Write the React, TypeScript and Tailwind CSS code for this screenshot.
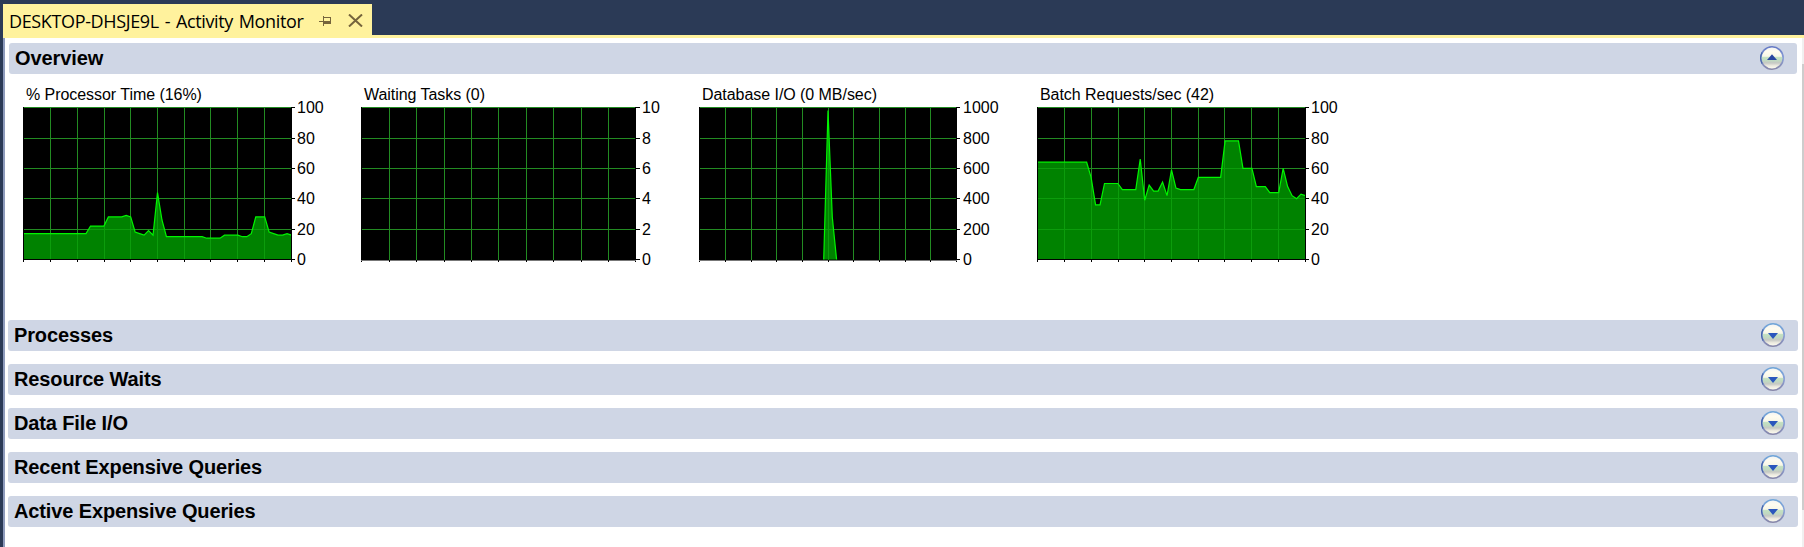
import React from 'react';

const repeat = (value: number, count: number): number[] => Array(count).fill(value);

interface ChartProps {
  id: string;
  title: string;
  max: number;
  grid: number[];
  width: number;
  labelX: number;
  values: number[];
}

// y of the horizontal grid lines, from the maximum down to zero
const rows = [1, 32, 62, 92, 123, 153];

const charts: ChartProps[] = [
  {
    id: 'cpu',
    title: '% Processor Time (16%)',
    max: 100,
    grid: [27, 54, 81, 107, 134, 161, 187, 214, 241],
    width: 268,
    labelX: 274,
    values: [
      ...repeat(17, 15), ...repeat(22, 4), ...repeat(28, 4), 29, 28, 18, 17, 16, 19, 16, 44, 26,
      ...repeat(15, 9), ...repeat(14, 4), ...repeat(16, 4), 15, 15, 17, 28, 28, 28, 18, 17, 16, 16, 17, 16,
    ],
  },
  {
    id: 'waiting',
    title: 'Waiting Tasks (0)',
    max: 10,
    grid: [28, 55, 83, 110, 137, 165, 192, 220, 247],
    width: 274,
    labelX: 281,
    values: [],
  },
  {
    id: 'io',
    title: 'Database I/O (0 MB/sec)',
    max: 1000,
    grid: [26, 52, 77, 103, 129, 154, 180, 206, 231],
    width: 257,
    labelX: 264,
    values: [...repeat(0, 30), 980, 280, ...repeat(0, 29)],
  },
  {
    id: 'batch',
    title: 'Batch Requests/sec (42)',
    max: 100,
    grid: [27, 54, 81, 107, 134, 161, 187, 214, 241],
    width: 268,
    labelX: 274,
    values: [
      ...repeat(64, 12), 54, 36, 36, ...repeat(50, 4), ...repeat(46, 4), 66, 39, 49, 45, 45, 51, 42, 59, 47,
      ...repeat(46, 4), ...repeat(54, 6), ...repeat(78, 4), 60, 60, 60, 48, 48, 48, 44, 44, 44, 60, 48, 42,
      40, 43, 42,
    ],
  },
];

const sections = ['Processes', 'Resource Waits', 'Data File I/O', 'Recent Expensive Queries', 'Active Expensive Queries'];

function Chart({ id, title, max, grid, width, labelX, values }: ChartProps) {
  const points = values.map((value, i) => [0.5 + (i * width) / 60, 153.5 - (value / max) * 152]);
  const active = points.filter((_, i) => values[i] > 0 || values[i - 1] > 0 || values[i + 1] > 0);
  const line = active.map((p) => p.join(',')).join(' ');
  const area = active.length ? `${active[0][0]},153.5 ${line} ${active[active.length - 1][0]},153.5` : '';
  const filled = values.length > 0 && values[0] > 0;

  const gridLines = (
    <>
      {rows.slice(0, 5).map((y) => (
        <rect key={y} x={0} y={y} width={width} height={1} />
      ))}
      {grid.map((x) => (
        <rect key={`x${x}`} x={x} y={1} width={1} height={153} />
      ))}
    </>
  );

  return (
    <div className="w-[338px] shrink-0">
      <h3 className="mb-px h-5 pl-[3px] text-base leading-5 tracking-[-0.05px] whitespace-nowrap">{title}</h3>
      <svg width="338" height="164" viewBox="0 0 338 164" className="block overflow-visible">
        <clipPath id={id}>
          <polygon points={area} />
        </clipPath>
        <rect x={0} y={1} width={width + 1} height={153} fill="#000" />
        <g fill="#228b22" shapeRendering="crispEdges">{gridLines}</g>
        {area && (
          <>
            <polygon points={area} fill="#008200" />
            <g clipPath={`url(#${id})`} fill="#0c9c0c">{gridLines}</g>
            <polyline points={line} fill="none" stroke="#00f500" strokeWidth={1.2} />
          </>
        )}
        <rect x={0} y={1} width={1} height={155} fill="#000" />
        <rect x={width} y={1} width={1} height={155} fill="#000" />
        <rect x={0} y={filled ? 153 : 154} width={width + 1} height={1} fill={filled ? '#000' : '#777'} />
        {grid.map((x) => (
          <rect key={x} x={x} y={154} width={1} height={2} fill="#000" />
        ))}
        {rows.map((y, i) => (
          <g key={y}>
            <rect x={width} y={y} width={labelX > 280 ? 5 : 4} height={1} fill="#000" />
            <text x={labelX} y={y + 6} fontSize={16}>
              {max - (max / 5) * i}
            </text>
          </g>
        ))}
      </svg>
    </div>
  );
}

function Toggle({ up }: { up?: boolean }) {
  const id = up ? 'toggle-up' : 'toggle-down';
  return (
    <svg width="24" height="24" viewBox="0 0 24 24" className="mb-px shrink-0">
      <defs>
        <linearGradient id={id} x1="0" y1="0" x2="0" y2="1">
          <stop offset="0" stopColor="#f0f2f4" />
          <stop offset="0.2" stopColor="#fffcf0" />
          <stop offset="0.42" stopColor="#f8f7e8" />
          <stop offset="0.48" stopColor="#c3e0c1" />
          <stop offset="0.6" stopColor="#c0dac1" />
          <stop offset="0.72" stopColor="#c6c8c4" />
          <stop offset="0.84" stopColor="#eceadf" />
          <stop offset="1" stopColor="#fffef2" />
        </linearGradient>
        <linearGradient id={`${id}-ring`} x1="0" y1="0" x2="0" y2="1">
          <stop offset="0" stopColor={up ? '#6478c4' : '#6fa5d8'} />
          <stop offset="0.5" stopColor="#8aa0d8" />
          <stop offset="1" stopColor="#8585a8" />
        </linearGradient>
      </defs>
      <circle cx="12" cy="12" r="11.2" fill={`url(#${id})`} stroke={`url(#${id}-ring)`} strokeWidth="1.6" />
      <path d="M2.2 6.4 A11.2 11.2 0 0 0 2.2 17.6" fill="none" stroke="#4565aa" strokeWidth="1.2" />
      {up ? (
        <path d="M12 8.2 L17 14 H7 Z" fill="#2845a0" />
      ) : (
        <path d="M7 10 H17 L12 16 Z" fill="#2b57bd" />
      )}
    </svg>
  );
}

export default function App() {
  return (
    <div className="flex h-[547px] w-[1804px] flex-col overflow-hidden bg-[#2b3a56] font-['Liberation_Sans',sans-serif] text-black">
      <div className="h-[35px] shrink-0 pt-1 pl-[3px]">
        <div className="flex h-[31px] w-[369px] items-center bg-[#fff29d] pl-[6px]">
          <span className="mt-[2px] w-[299px] shrink-0 font-['Open_Sans',sans-serif] text-[18px] leading-[28px] tracking-[-0.36px] [word-spacing:1.5px] whitespace-nowrap">
            DESKTOP-DHSJE9L - Activity Monitor
          </span>
          <svg width="13" height="12" viewBox="0 0 13 12" className="mt-[4px] ml-[11px] shrink-0" fill="#75643c" shapeRendering="crispEdges">
            <path d="M0 5h4V0h1v1h7v7H5v2H4V6H0Z M5 2v3h6V2Z" fillRule="evenodd" />
          </svg>
          <svg width="15" height="13" viewBox="0 0 15 13" className="mt-px ml-[16px] shrink-0">
            <path d="M1 0.5 L14 12.5 M14 0.5 L1 12.5" stroke="#75643c" strokeWidth="2" />
          </svg>
        </div>
      </div>
      <div className="ml-[3px] h-[3px] shrink-0 bg-[#fff29d]" />

      <div className="ml-[3px] flex min-h-0 flex-1 border-l-2 border-[#8e9bbc] bg-white">
        <main className="flex-1 pt-[5px] pr-1 pl-[3px]">
          <header className="mr-px ml-px flex h-[31px] items-center justify-between rounded-[3px] bg-[#cfd6e5] pr-[13px] pl-[6px]">
            <h2 className="text-xl leading-[31px] font-bold tracking-[-0.08px]">Overview</h2>
            <Toggle up />
          </header>
          <div className="flex h-[246px] pt-[11px] pl-[15px]">
            {charts.map((chart) => (
              <Chart key={chart.id} {...chart} />
            ))}
          </div>
          <div className="flex flex-col gap-[13px]">
            {sections.map((name) => (
              <header key={name} className="flex h-[31px] items-center justify-between rounded-[3px] bg-[#cfd6e5] pr-[13px] pl-[6px]">
                <h2 className="text-xl leading-[31px] font-bold tracking-[-0.13px]">{name}</h2>
                <Toggle />
              </header>
            ))}
          </div>
        </main>
        <div className="w-[2px] bg-[#f0f0f0] pt-[26px]">
          <div className="h-[446px] bg-[#cdcdcd]" />
        </div>
      </div>
    </div>
  );
}
